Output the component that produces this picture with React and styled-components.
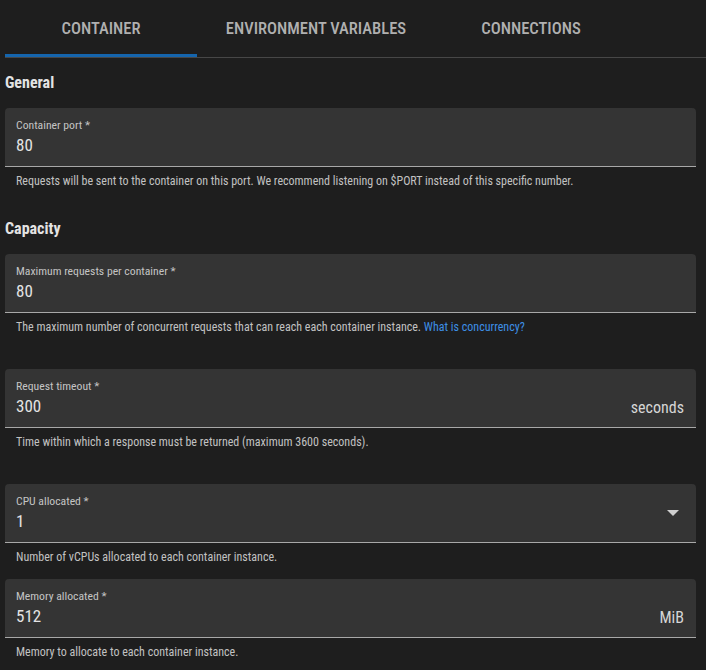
import React from 'react';
import styled, { createGlobalStyle } from 'styled-components';

const GlobalStyle = createGlobalStyle`
    body {
        margin: 0;
        background: #1e1e1e;
        font-family: 'Roboto Condensed', 'Liberation Sans Narrow', Roboto, 'Liberation Sans', sans-serif;
        color: #e0e0e0;
    }
`;

const Page = styled.div`
    padding: 0 10px 0 5px;
    width: 706px;
    box-sizing: border-box;
`;

const TabBar = styled.div`
    display: flex;
    margin-right: -10px;
    border-bottom: 1px solid #474747;
`;

const Tab = styled.div`
    width: ${props => props.width}px;
    height: 57px;
    box-sizing: border-box;
    display: flex;
    align-items: center;
    justify-content: center;
    padding-top: 2px;
    font-size: 16.6px;
    font-weight: 500;
    color: #b0b0b0;
    border-bottom: 3px solid ${props => (props.active ? '#1565ad' : 'transparent')};
`;

const Heading = styled.h2`
    margin: 15px 0 15px;
    font-size: 16px;
    line-height: 20px;
    font-weight: 700;
    color: #e3e3e3;
`;

const Field = styled.div`
    display: flex;
    align-items: center;
    height: 58px;
    padding: 0 12px 0 11px;
    background: #343434;
    border-radius: 4px 4px 0 0;
    border-bottom: 1px solid #a8a8a8;
`;

const FieldBody = styled.div`
    flex: 1;
    display: flex;
    flex-direction: column;
    margin-top: -1px;
`;

const Label = styled.span`
    font-size: 11.7px;
    line-height: 15px;
    color: #c4c4c4;
`;

const Value = styled.span`
    margin-top: 1px;
    font-size: 17px;
    line-height: 22px;
    color: #e4e4e4;
`;

const Suffix = styled.span`
    margin-top: 18px;
    font-size: 16px;
    color: #d6d6d6;
`;

const Arrow = styled.span`
    width: 0;
    height: 0;
    margin-right: 5px;
    border-left: 6px solid transparent;
    border-right: 6px solid transparent;
    border-top: 6px solid #cfcfcf;
`;

const Helper = styled.p`
    margin: 6px 0 ${props => props.gap}px;
    padding-left: 11px;
    font-size: 12px;
    line-height: 16px;
    color: #c2c2c2;
`;

const Link = styled.a`
    color: #3d8fe6;
    text-decoration: none;
`;

const tabs = [
    { name: 'CONTAINER', width: 192, active: true },
    { name: 'ENVIRONMENT VARIABLES', width: 238 },
    { name: 'CONNECTIONS', width: 192 },
];

const TextField = ({ label, value, suffix, select, helper, gap }) => (
    <>
        <Field>
            <FieldBody>
                <Label>{label} *</Label>
                <Value>{value}</Value>
            </FieldBody>
            {suffix && <Suffix>{suffix}</Suffix>}
            {select && <Arrow />}
        </Field>
        <Helper gap={gap}>{helper}</Helper>
    </>
);

export default function App() {
    return (
        <>
            <GlobalStyle />
            <Page>
                <TabBar>
                    {tabs.map(tab => (
                        <Tab key={tab.name} width={tab.width} active={tab.active}>
                            {tab.name}
                        </Tab>
                    ))}
                </TabBar>

                <Heading>General</Heading>
                <TextField
                    label="Container port"
                    value="80"
                    helper="Requests will be sent to the container on this port. We recommend listening on $PORT instead of this specific number."
                    gap={30}
                />

                <Heading>Capacity</Heading>
                <TextField
                    label="Maximum requests per container"
                    value="80"
                    helper={
                        <>
                            The maximum number of concurrent requests that can reach each container instance.{' '}
                            <Link href="#">What is concurrency?</Link>
                        </>
                    }
                    gap={34}
                />
                <TextField
                    label="Request timeout"
                    value="300"
                    suffix="seconds"
                    helper="Time within which a response must be returned (maximum 3600 seconds)."
                    gap={34}
                />
                <TextField
                    label="CPU allocated"
                    value="1"
                    select
                    helper="Number of vCPUs allocated to each container instance."
                    gap={14}
                />
                <TextField
                    label="Memory allocated"
                    value="512"
                    suffix="MiB"
                    helper="Memory to allocate to each container instance."
                    gap={0}
                />
            </Page>
        </>
    );
}
